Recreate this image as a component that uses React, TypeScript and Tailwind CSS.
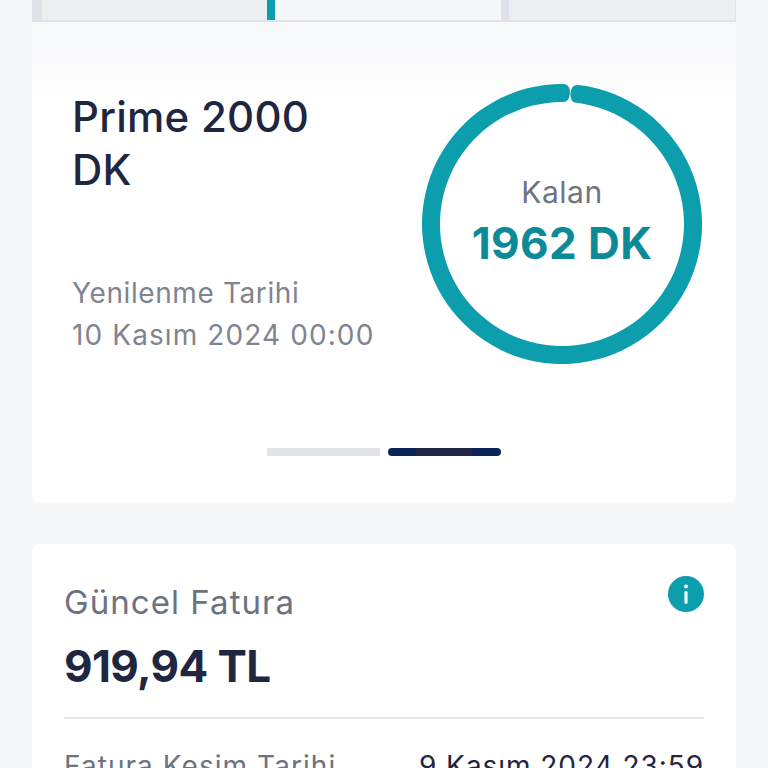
const R = 140, r = 122, C = 140;
const pt = (rad: number, deg: number) => {
  const t = (deg * Math.PI) / 180;
  return `${(C + rad * Math.sin(t)).toFixed(2)} ${(C - rad * Math.cos(t)).toFixed(2)}`;
};
const a0 = 3.6, tip = 0.12, side = 3.2, m = (R + r) / 2;
const ring = [
  `M${pt(m, a0 + tip)}`,
  `Q${pt(R, a0 + tip)} ${pt(R, a0 + side)}`,
  `A${R} ${R} 0 1 1 ${pt(R, a0 - side)}`,
  `Q${pt(R, a0 - tip)} ${pt(m, a0 - tip)}`,
  `Q${pt(r, a0 - tip)} ${pt(r, a0 - side)}`,
  `A${r} ${r} 0 1 0 ${pt(r, a0 + side)}`,
  `Q${pt(r, a0 + tip)} ${pt(m, a0 + tip)}`,
  "Z",
].join(" ");

export default function App() {
  return (
    <div className="h-[768px] overflow-hidden bg-[#f6f7f9] px-8 font-['Inter',sans-serif]">
      <div className="flex h-[22px] border-b-2 border-[#dfe2e8] bg-[#dfe2e8]">
        <div className="ml-[10px] w-[225px] bg-[#eceef2]" />
        <div className="w-2 bg-[#0e9fae]" />
        <div className="w-[226px] bg-[#f6f7f9]" />
        <div className="ml-2 w-[226px] bg-[#eceef2]" />
      </div>

      <section className="h-[481px] rounded-b-lg bg-gradient-to-b from-[#f7f8fa] to-white to-[18%]">
        <div className="flex justify-between pl-10 pr-[34px] pt-[62px]">
          <div className="w-[330px] pt-[6px]">
            <h2 className="w-[260px] text-[42px] leading-[53px] font-[450] tracking-[0.25px] text-[#1f2640]">Prime 2000 DK</h2>
            <p className="mt-[76px] text-[28px] leading-[42px] text-[#7f848f]">
              <span className="block tracking-[0.6px]">Yenilenme Tarihi</span>
              <span className="block tracking-[1.1px]">10 Kasım 2024 00:00</span>
            </p>
          </div>
          <div className="relative h-[280px] w-[280px]">
            <svg viewBox="0 0 280 280" className="h-[280px] w-[280px]">
              <path d={ring} fill="#0d9eae" />
            </svg>
            <div className="absolute inset-0 flex flex-col items-center pt-[87px]">
              <span className="text-[30px] leading-[42px] tracking-[0.5px] text-[#6f7482]">Kalan</span>
              <span className="mt-[4px] text-[44px] leading-[52px] font-bold tracking-[0.4px] text-[#0c8a97]">1962 DK</span>
            </div>
          </div>
        </div>
        <div className="mt-[84px] flex justify-center gap-2">
          <div className="h-2 w-[113px] bg-[#e0e3e9]" />
          <div className="flex h-2 w-[113px] overflow-hidden rounded-sm bg-[#0b2559]">
            <div className="ml-7 w-14 bg-[#1f2440]" />
          </div>
        </div>
      </section>

      <section className="mt-[41px] rounded-lg bg-white px-8 pt-[37px]">
        <div className="flex items-start justify-between">
          <div>
            <h3 className="text-[33px] leading-[42px] tracking-[1.05px] text-[#6b7280]">Güncel Fatura</h3>
            <p className="mt-[22px] text-[44px] leading-[42px] font-bold tracking-[-0.6px] text-[#1f2640]">919,94 TL</p>
          </div>
          <svg viewBox="0 0 36 36" className="-mt-[5px] h-9 w-9">
            <circle cx="18" cy="18" r="18" fill="#0d9eae" />
            <circle cx="18" cy="10.5" r="2" fill="#e8fbfd" />
            <rect x="16.4" y="15" width="3.2" height="13" rx="1.4" fill="#e8fbfd" />
          </svg>
        </div>
        <div className="mt-[30px] h-0.5 bg-[#e5e7eb]" />
        <div className="mt-[26px] flex justify-between text-[28px] leading-[42px]">
          <span className="tracking-[1.05px] text-[#6b7280]">Fatura Kesim Tarihi</span>
          <span className="tracking-[0.95px] text-[#1f2640]">9 Kasım 2024 23:59</span>
        </div>
      </section>
    </div>
  );
}
